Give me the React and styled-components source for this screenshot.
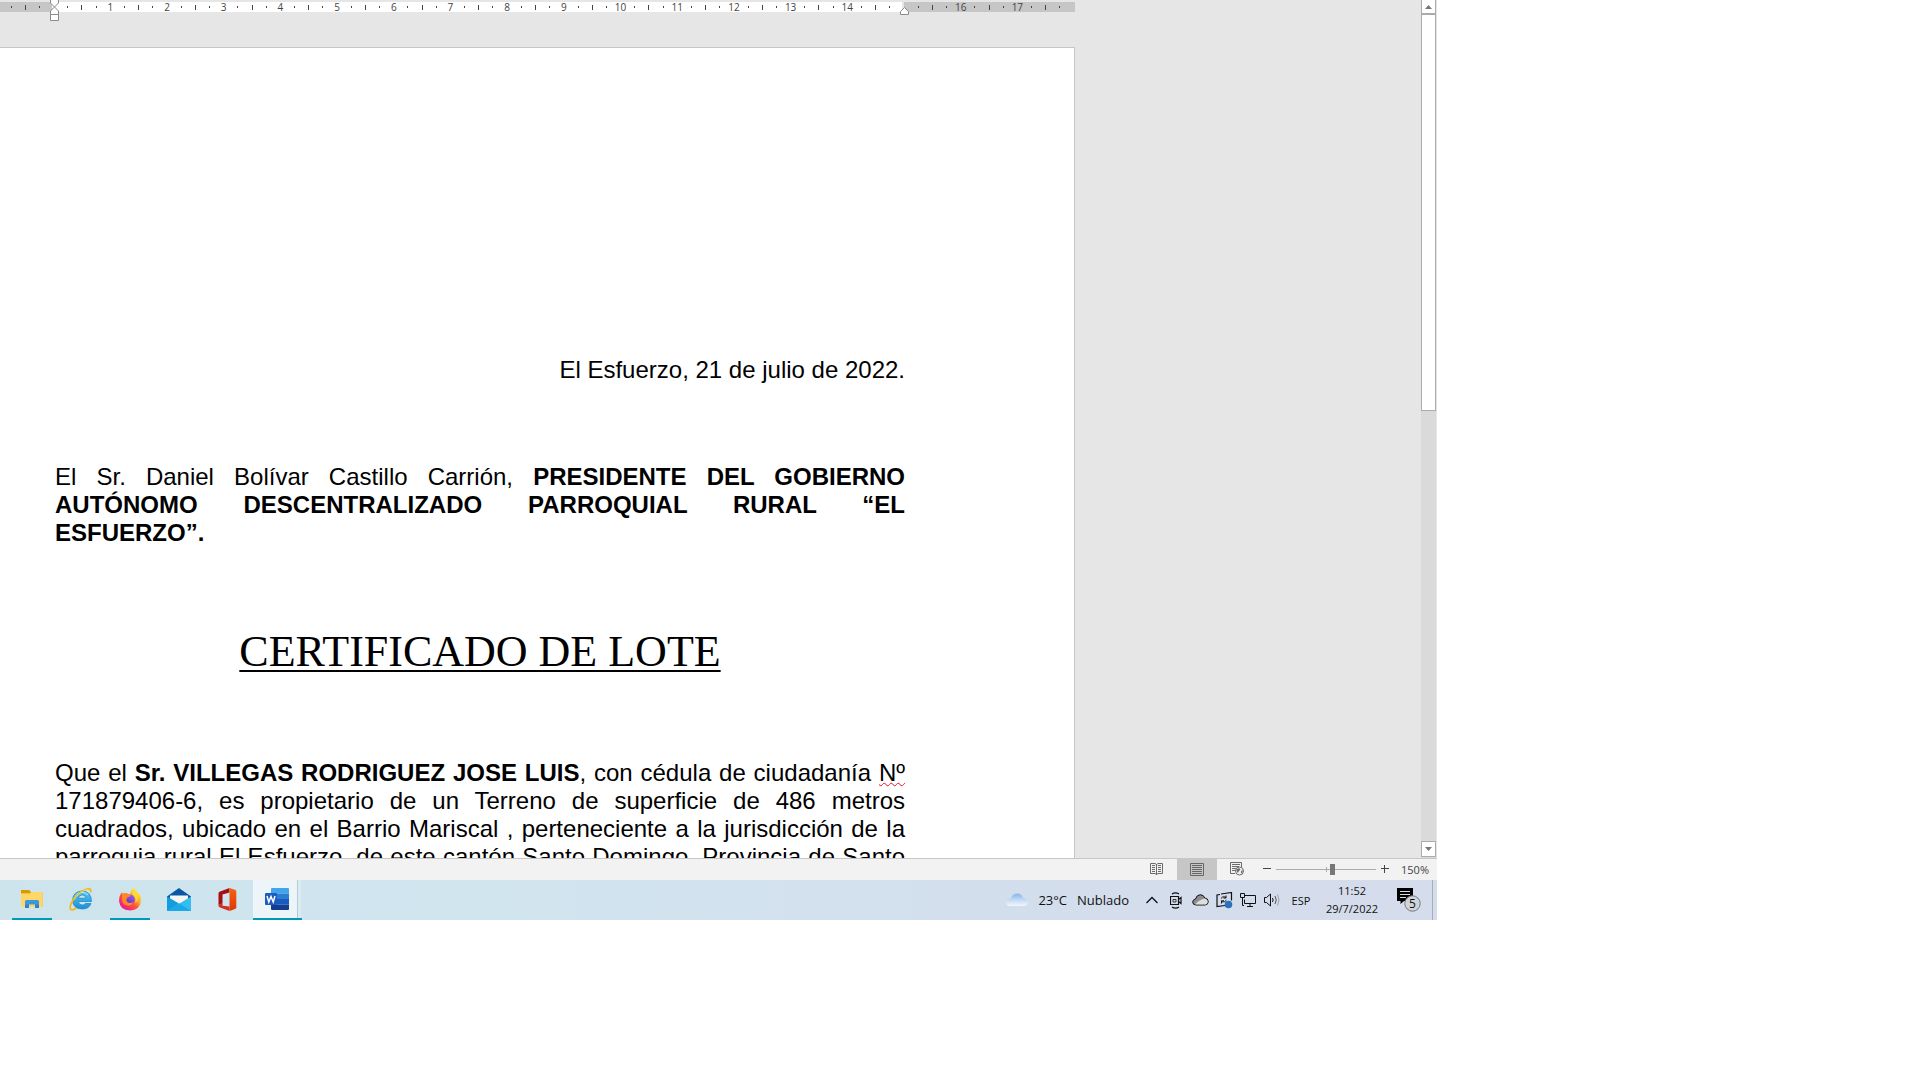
import { useState } from "react";
import styled, { createGlobalStyle } from "styled-components";

const GlobalStyle = createGlobalStyle`
  * {
    box-sizing: border-box;
  }

  body {
    margin: 0;
    background: #ffffff;
    font-family: "Open Sans", "Noto Sans", sans-serif;
  }

  button {
    padding: 0;
    border: none;
    background: none;
    color: inherit;
    font: inherit;
  }

  svg {
    display: block;
  }
`;

// The captured desktop leaves a blank band on the right and at the bottom
const Screen = styled.div`
  display: flex;
  flex-direction: column;
  height: 100vh;
  padding: 0 483px 160px 0;
  overflow: hidden;
`;

/* ---------- Word: document area ---------- */

const Workspace = styled.main`
  display: flex;
  flex: 1;
  min-height: 0;
  overflow: hidden;
  background: #e6e6e6;
`;

const DocumentColumn = styled.div`
  display: flex;
  flex: 1;
  flex-direction: column;
  min-width: 0;
  margin-right: 346px;
  padding-top: 2px;
`;

const Ruler = styled.div`
  display: grid;
  grid-template-columns: repeat(75, minmax(0, 1fr));
  flex: none;
  height: 10px;
  margin-bottom: 35px;
  padding: 0 8px 0 4px;
  background: linear-gradient(
    to right,
    #c6c6c6 52px,
    #ffffff 52px calc(100% - 173px),
    #e6e6e6 calc(100% - 173px) calc(100% - 171px),
    #c6c6c6 calc(100% - 171px)
  );
`;

const Tick = styled.span`
  display: flex;
  position: relative;
  align-items: center;
  justify-content: center;
  color: #444444;
  font-size: 10px;
  line-height: 10px;

  &::before {
    content: "";
    display: ${({ $kind }) => ($kind === "dot" || $kind === "line" ? "block" : "none")};
    width: 1px;
    height: ${({ $kind }) => ($kind === "line" ? "5px" : "2px")};
    background: #444444;
  }
`;

// Indent markers hang over the edge of the ruler
const Marker = styled.svg`
  position: absolute;
  top: ${({ $top }) => $top};
  left: 50%;
  margin-left: -4px;
`;

const Page = styled.article`
  flex: 1;
  min-height: 0;
  padding: 308px 169px 0 55px;
  overflow: hidden;
  border-top: 1px solid #c6c6c6;
  border-right: 1px solid #c6c6c6;
  background: #ffffff;
  color: #000000;
  font-family: "Liberation Sans", Arial, sans-serif;
  font-size: 24px;
  line-height: 28px;
`;

const Paragraph = styled.p`
  margin: 0;
  text-align: justify;
  text-align-last: ${({ $fill }) => ($fill ? "justify" : "auto")};
`;

const DateLine = styled(Paragraph)`
  margin-bottom: 79px;
  text-align: right;
`;

const Title = styled.h1`
  margin: 80px 0 82px;
  font-family: "Liberation Serif", "Times New Roman", serif;
  font-size: 44px;
  font-weight: 400;
  line-height: 50px;
  text-align: center;
  text-decoration: underline 2px;
  text-underline-offset: 4px;
  text-decoration-skip-ink: none;
`;

const Misspelled = styled.span`
  text-decoration: underline wavy #e8112d 1px;
  text-decoration-skip-ink: none;
`;

const Scrollbar = styled.div`
  display: flex;
  flex: none;
  flex-direction: column;
  width: 16px;
  padding-bottom: 1px;
  border-right: 1px solid #e6e6e6;
  background: #dadada;
`;

const ScrollButton = styled.button`
  display: flex;
  flex: none;
  align-items: center;
  justify-content: center;
  height: ${({ $height }) => $height};
  border: 1px solid #ababab;
  border-top-width: ${({ $cut }) => ($cut ? "0" : "1px")};
  background: #ffffff;
`;

const ScrollTrack = styled.div`
  flex: 1;
`;

const ScrollThumb = styled.div`
  height: 48%;
  border: 1px solid #ababab;
  background: #ffffff;
`;

/* ---------- Word: status bar ---------- */

const StatusBar = styled.footer`
  display: flex;
  flex: none;
  justify-content: flex-end;
  height: 22px;
  padding-right: 8px;
  border-top: 1px solid #c6c6c6;
  background: #f2f2f2;
  color: #444444;
  font-size: 11px;
`;

const ViewButton = styled.button`
  display: flex;
  align-items: center;
  justify-content: center;
  width: 40px;
  padding-bottom: 1px;
  background: ${({ $active }) => ($active ? "#c6c6c6" : "transparent")};
`;

const ZoomGroup = styled.div`
  display: flex;
  align-items: center;
  margin-left: 2px;
  padding-bottom: 1px;
`;

const ZoomButton = styled.button`
  display: flex;
  align-items: center;
  justify-content: center;
  width: 16px;
  height: 16px;
`;

const ZoomSlider = styled.input`
  width: 100px;
  height: 12px;
  margin: 0 1px;
  appearance: none;
  background:
    linear-gradient(#ababab, #ababab) center / 1px 5px no-repeat,
    linear-gradient(#ababab, #ababab) center / 100% 1px no-repeat;

  &::-webkit-slider-thumb {
    width: 5px;
    height: 11px;
    appearance: none;
    background: #777777;
  }
`;

const ZoomValue = styled.output`
  min-width: 28px;
  margin-left: 8px;
  text-align: right;
`;

/* ---------- Windows taskbar ---------- */

const Taskbar = styled.nav`
  display: flex;
  flex: none;
  justify-content: space-between;
  height: 40px;
  padding-left: 8px;
  background: linear-gradient(to right, #cde4ed, #d1e5ef 35%, #d3deec 70%, #d5dcec);
  color: #111111;
`;

const TaskbarGroup = styled.div`
  display: flex;
`;

const AppButton = styled.button`
  display: flex;
  align-items: center;
  justify-content: center;
  width: 49px;
  padding-right: 2px;
  border-bottom: 2px solid transparent;
  background: ${({ $running }) =>
    $running ? "linear-gradient(#0099bc, #0099bc) 4px 100% / 40px 2px no-repeat border-box" : "none"};
`;

// Current app: lighter tile, with a second window peeking out behind it
const ActiveAppButton = styled(AppButton)`
  padding-right: 1px;
  border-bottom-color: #0099bc;
  background: linear-gradient(
    to right,
    #edf5f9 44px,
    #b4cbd6 44px 45px,
    #dcebf2 45px 48px,
    transparent 48px
  );
  background-clip: padding-box;
`;

const TrayButton = styled.button`
  display: flex;
  align-items: center;
  justify-content: center;
  width: ${({ $width }) => $width || "24px"};
  font-size: 11px;
`;

const Weather = styled.button`
  display: flex;
  align-items: center;
  gap: 10px;
  margin-right: 11px;
  font-size: 13px;
`;

const Clock = styled(TrayButton)`
  flex-direction: column;
  line-height: 18px;
`;

const ShowDesktop = styled.button`
  width: 5px;
  border-left: 1px solid #a3adbb;
`;

/* ---------- Icons ---------- */

const Arrow = ({ down }) => (
  <svg width="7" height="4" viewBox="0 0 7 4" aria-hidden="true">
    <path d={down ? "M0 0h7L3.5 4z" : "M0 4h7L3.5 0z"} fill="#777" />
  </svg>
);

const ReadIcon = () => (
  <svg width="14" height="14" viewBox="0 0 14 14" fill="none" stroke="#6b6b6b">
    <path d="M6.5 2.5 5 1.5H.5v10H5l1.5 1 1.5-1h4.500v-10H8zM6.500 2v11" />
    <path d="M2 3.500h3M2 5.500h3M2 7.500h3M2 9.500h3M8 3.500h3M8 5.500h3M8 7.500h3M8 9.500h3" />
  </svg>
);

const PrintIcon = () => (
  <svg width="14" height="13" viewBox="0 0 14 13" fill="none" stroke="#666">
    <path d="M.5.5h13v12H.5zM2 2.500h10M2 4.500h10M2 6.500h10M2 8.500h10M2 10.500h10" />
  </svg>
);

const WebIcon = () => (
  <svg width="14" height="14" viewBox="0 0 14 14" fill="none" stroke="#6b6b6b">
    <path d="M5 11.500H.5V.5h11V5M2 2.500h8M2 4.500h7M2 6.500h4M2 8.500h3" />
    <circle cx="9.500" cy="9" r="4" fill="#f2f2f2" />
    <path d="M6.500 7.500 9 6l1.500 1.500L9 9l-1 2-1.500-2zM11 9l2-1-1 3-1 .5z" fill="#6b6b6b" stroke="none" />
  </svg>
);

const ExplorerIcon = () => (
  <svg width="22" height="20" viewBox="0 0 22 20">
    <path d="M0 1.500Q0 1 .6 1H8l2 2h10.500q1 0 1 1v14H0z" fill="#e9a820" />
    <path d="M0 4.500h9l1.500-1.500H20.500q1 0 1 1V18H0z" fill="#ffd768" />
    <path d="M0 1.500Q0 1 .6 1H8l1.500 1.800L8.500 4H0z" fill="#d99a00" />
    <path d="M4 19v-6.500Q4 11 5.500 11h11q1.500 0 1.500 1.500V19h-4v-3.500H8V19z" fill="#3c97dd" />
    <path d="M4 15.500h4V19H4zM14 15.500h4V19h-4z" fill="#2b85cd" />
  </svg>
);

const ExplorerEIcon = () => (
  <svg width="24" height="24" viewBox="0 0 24 24" fill="none">
    <defs>
      <linearGradient id="ie" x2="0" y2="1">
        <stop stopColor="#55c7f4" />
        <stop offset="1" stopColor="#1b8fd6" />
      </linearGradient>
    </defs>
    <path
      d="M22.500 14.500H9.300q.6 3.500 4 3.500 2.200 0 3-1.500h5.700Q20 22 13.200 22 4 22 3.500 13.200 4 4.500 13.200 4 22.500 4.500 22.500 14.500zM9.300 11.200h7.600Q16.500 8 13.200 8 10 8 9.300 11.200z"
      fill="url(#ie)"
      stroke="#1683c4"
      strokeWidth=".7"
    />
    <path d="M6 9Q8 5.500 13 5.300q4 0 6 2.700" stroke="#b5ecff" strokeWidth="1" />
    <path
      d="M21.500 5.500Q22.800.8 18 2 9.500 4.500 4 13-.3 20.500 2 22.500q1.500 1 5.500-1.500"
      stroke="#eeb81c"
      strokeWidth="1.800"
    />
    <path d="M19 2.300Q10 5 4.800 13" stroke="#ffe26b" strokeWidth=".7" />
  </svg>
);

const FirefoxIcon = () => (
  <svg width="24" height="24" viewBox="0 0 24 24">
    <defs>
      <linearGradient id="fox" x1=".85" y1=".1" x2=".2" y2=".9">
        <stop stopColor="#fff04a" />
        <stop offset=".35" stopColor="#ffae25" />
        <stop offset=".6" stopColor="#ff553c" />
        <stop offset="1" stopColor="#ed198c" />
      </linearGradient>
      <linearGradient id="foxGlobe" x1=".8" x2=".2" y2="1">
        <stop stopColor="#ad55e4" />
        <stop offset="1" stopColor="#493aca" />
      </linearGradient>
    </defs>
    <path
      d="M16 .5q1 2.500 3.200 4.500 1 .8 1.300 2L21 6q2.300 3.500 2 7.500-.8 9.500-11 10Q2 23.300 1 14q-.3-4 1.500-6.500L4 5l.5 2Q6 5.500 8.500 6 10 7 12 7.300l1-3Q13.800 2 16 .5z"
      fill="url(#fox)"
    />
    <circle cx="11.800" cy="12.500" r="5" fill="url(#foxGlobe)" />
    <path d="M4 7.500q3-2.500 7 .2l2 .5q-.3 1.700-3.500 2l-1 2.100Q7.800 15 11 16q2.500.2 4-1.200-.5 3.500-4.500 4Q4 18 4 12z" fill="#ff8a22" />
    <path d="M15.500 3q-2.500 3 .8 5.800Q19 12 17 16q4-2.500 2.500-8-1-2.500-4-5z" fill="#ffdb36" />
  </svg>
);

const MailIcon = () => (
  <svg width="24" height="23" viewBox="0 0 24 23">
    <path d="M0 8.500 12 0l12 8.500V12H0z" fill="#0a58a5" />
    <path d="M3 7.500h18V12l-9 7-9-7z" fill="#f5f5f5" />
    <path d="M0 8.500 12 15.500 4 23H0z" fill="#139de0" />
    <path d="M24 8.500V23H0z" fill="#36bdf0" />
    <path d="M0 23 12.500 15.500 24 23z" fill="#1aa8e8" />
  </svg>
);

const OfficeIcon = () => (
  <svg width="19" height="23" viewBox="0 0 19 23">
    <defs>
      <linearGradient id="office" x2="0" y2="1">
        <stop stopColor="#f56412" />
        <stop offset="1" stopColor="#db3709" />
      </linearGradient>
    </defs>
    <path d="M11.500 0 1.500 3.800Q.5 4.300.5 5.500v11.700l4-2V6.500l7-2z" fill="#a60f12" />
    <path d="M.5 17.200 4.500 15v2.700l7 .8V23L2 19.500Q.5 19 .5 17.200z" fill="#d42b22" />
    <path d="M11.500 0 17 1.800q1.300.5 1.300 1.700v15.700q0 1.300-1.300 1.800L11.500 23z" fill="url(#office)" />
  </svg>
);

const WordIcon = () => (
  <svg width="24" height="22" viewBox="0 0 24 22">
    <path d="M6 1q0-1 1-1h16q1 0 1 1v4.500H6z" fill="#41a5ee" />
    <path d="M6 5.500h18V11H6z" fill="#2b7cd3" />
    <path d="M6 11h18v5.500H6z" fill="#185abd" />
    <path d="M6 16.500h18V21q0 1-1 1H7q-1 0-1-1z" fill="#103f91" />
    <rect y="5" width="12" height="12" rx="1" fill="#1b5cbe" />
    <path d="m2 8 1.800 6L6 8.500 8.200 14 10 8" fill="none" stroke="#fff" strokeWidth="1.500" />
  </svg>
);

const CloudIcon = () => (
  <svg width="22" height="14" viewBox="0 0 22 14">
    <defs>
      <linearGradient id="cloud" x2="0" y2="1">
        <stop stopColor="#86b4ea" />
        <stop offset=".55" stopColor="#c8dcf6" />
        <stop offset="1" stopColor="#f2f6fc" />
      </linearGradient>
    </defs>
    <path d="M4 13q-4-.3-4-3.500Q.2 6 4.500 6 6 .6 11 .5q5 .2 6 4.500 5 .3 5 4.300-.3 3.500-4.500 3.700z" fill="url(#cloud)" />
  </svg>
);

const ChevronIcon = () => (
  <svg width="12" height="8" viewBox="0 0 12 8" fill="none" stroke="#111" strokeWidth="1.300">
    <path d="m.5 7 5.500-5.500L11.500 7" />
  </svg>
);

const CameraIcon = () => (
  <svg width="12" height="17" viewBox="0 0 12 17" fill="none" stroke="#111" strokeWidth="1.200">
    <path d="M.5 4.500h8v8h-8zM8.500 7.500l2.500-2v6l-2.500-2M2 2Q5.500-.3 9 2M2 15q3.500 2.300 7 0" />
    <path d="M3 7.500h3v2.500H3z" strokeWidth=".8" />
  </svg>
);

const OneDriveIcon = () => (
  <svg width="17" height="12" viewBox="0 0 17 12" stroke="#111">
    <path d="M4 11Q.7 10.800.7 8 1 5.300 3.500 5 4.500 1 8.200.7q3.500.1 4.600 3.300 3.400.3 3.500 3.700Q16 11 13 11z" fill="#8d8d8d" />
    <path d="M3 10.500Q6 6.500 12 4.500q3.500.3 3.700 3.200Q15.500 10.500 13 10.500z" fill="#dedede" stroke="none" />
  </svg>
);

const SyncScreenIcon = () => (
  <svg width="17" height="17" viewBox="0 0 17 17" fill="none" stroke="#111">
    <path d="M9 13.500 1 14.500V3l3-.5M5 2l10.500-1.500v8" strokeWidth="1.200" />
    <path d="M5 6.500q1.500-2.500 4-1.500l1 .5M10 3.500v2.500H7.500M10.500 8q-1.500 2.500-4 1.800L5.500 9M5.500 11.500V8.800H8" />
    <circle cx="12.500" cy="12.500" r="3.800" fill="#2a72c0" stroke="none" />
  </svg>
);

const NetworkIcon = () => (
  <svg width="17" height="14" viewBox="0 0 17 14" fill="none" stroke="#111">
    <path d="M5 2.500h10.500v8H4.500v-4M7 13.500h6M10 10.500v3M.5.5h4v4h-4zM2.500 4.500v8H4" />
  </svg>
);

const VolumeIcon = () => (
  <svg width="17" height="14" viewBox="0 0 17 14" fill="none" stroke="#111">
    <path d="M.5 4.500h2L6.500 1v12l-4-3.500h-2zM8.500 5q1.200 2 0 4" />
    <path d="M11 3q2.500 4 0 8" stroke="#555" />
    <path d="M13.500 1.500q3 5.500 0 11" stroke="#9aa2ae" />
  </svg>
);

const NoticeIcon = () => (
  <svg width="24" height="24" viewBox="0 0 24 24">
    <path d="M0 0h16v13H7l-3.500 3V13H0z" fill="#000" />
    <path d="M3 3.500h10M3 6.500h10M3 9.500h6" stroke="#d5dcec" />
    <circle cx="15.500" cy="15.500" r="7.700" fill="#cfd3da" stroke="#737780" />
    <text x="15.500" y="20" fill="#111" fontSize="12" textAnchor="middle">
      5
    </text>
  </svg>
);

/* ---------- App ---------- */

// Quarter-centimetre steps; index 3 is the left margin, 63 the right one
const tickAt = (index) => {
  const quarter = index - 3;
  if (quarter === 0) return { kind: "start" };
  if (quarter === 60) return { kind: "end" };
  if (quarter % 4 === 0) return { kind: "number", label: quarter / 4 };
  return { kind: quarter % 2 === 0 ? "line" : "dot" };
};

const ticks = Array.from({ length: 75 }, (_, index) => tickAt(index));

const RulerBar = () => (
  <Ruler>
    {ticks.map(({ kind, label }, index) => (
      <Tick key={index} $kind={kind}>
        {label}
        {kind === "start" && (
          <Marker $top="-2px" width="9" height="21" viewBox="0 0 9 21" fill="#fff" stroke="#8a8a8a">
            <path d="M.5 0v3l4 4 4-4V0M.5 14.500V11l4-4 4 4v3.500zM.5 14.500h8v6h-8z" />
          </Marker>
        )}
        {kind === "end" && (
          <Marker $top="5px" width="9" height="8" viewBox="0 0 9 8" fill="#fff" stroke="#8a8a8a">
            <path d="M.5 7.500V4.500l4-4 4 4v3z" />
          </Marker>
        )}
      </Tick>
    ))}
  </Ruler>
);

const ZoomControl = () => {
  const [position, setPosition] = useState(57);
  const step = (amount) => setPosition((value) => value + amount);

  return (
    <ZoomGroup>
      <ZoomButton aria-label="Alejar" onClick={() => step(-4)}>
        <svg width="8" height="8" stroke="#444">
          <path d="M0 3.500h8" />
        </svg>
      </ZoomButton>
      <ZoomSlider
        type="range"
        aria-label="Zoom"
        value={position}
        onChange={(event) => setPosition(Number(event.target.value))}
      />
      <ZoomButton aria-label="Acercar" onClick={() => step(4)}>
        <svg width="8" height="8" stroke="#444">
          <path d="M0 3.500h8M3.500 0v8" />
        </svg>
      </ZoomButton>
      <ZoomValue>150%</ZoomValue>
    </ZoomGroup>
  );
};

const App = () => {
  return (
    <>
      <GlobalStyle />
      <Screen>
        <Workspace>
          <DocumentColumn>
            <RulerBar />
            <Page>
              <DateLine>El Esfuerzo, 21 de julio de 2022.</DateLine>
              <Paragraph>
                El Sr. Daniel Bolívar Castillo Carrión,{" "}
                <b>PRESIDENTE DEL GOBIERNO AUTÓNOMO DESCENTRALIZADO PARROQUIAL RURAL “EL ESFUERZO”.&nbsp;</b>
              </Paragraph>
              <Title>CERTIFICADO DE LOTE</Title>
              <Paragraph $fill>
                Que el <b>Sr. VILLEGAS RODRIGUEZ JOSE LUIS</b>, con cédula de ciudadanía{" "}
                <Misspelled>Nº</Misspelled> 171879406-6, es propietario de un Terreno de superficie de 486
                metros cuadrados, ubicado en el Barrio Mariscal , perteneciente a la jurisdicción de la
                parroquia rural El Esfuerzo, de este cantón Santo Domingo, Provincia de Santo
              </Paragraph>
            </Page>
          </DocumentColumn>
          <Scrollbar>
            <ScrollButton $height="14px" $cut aria-label="Subir">
              <Arrow />
            </ScrollButton>
            <ScrollTrack>
              <ScrollThumb />
            </ScrollTrack>
            <ScrollButton $height="16px" aria-label="Bajar">
              <Arrow down />
            </ScrollButton>
          </Scrollbar>
        </Workspace>

        <StatusBar>
          <ViewButton aria-label="Modo de lectura">
            <ReadIcon />
          </ViewButton>
          <ViewButton $active aria-label="Diseño de impresión">
            <PrintIcon />
          </ViewButton>
          <ViewButton aria-label="Diseño web">
            <WebIcon />
          </ViewButton>
          <ZoomControl />
        </StatusBar>

        <Taskbar>
          <TaskbarGroup>
            <AppButton $running aria-label="Explorador de archivos">
              <ExplorerIcon />
            </AppButton>
            <AppButton aria-label="Internet Explorer">
              <ExplorerEIcon />
            </AppButton>
            <AppButton $running aria-label="Firefox">
              <FirefoxIcon />
            </AppButton>
            <AppButton aria-label="Correo">
              <MailIcon />
            </AppButton>
            <AppButton aria-label="Office">
              <OfficeIcon />
            </AppButton>
            <ActiveAppButton aria-label="Word">
              <WordIcon />
            </ActiveAppButton>
          </TaskbarGroup>

          <TaskbarGroup>
            <Weather>
              <CloudIcon />
              <span>23°C</span>
              <span>Nublado</span>
            </Weather>
            <TrayButton aria-label="Mostrar iconos ocultos">
              <ChevronIcon />
            </TrayButton>
            <TrayButton aria-label="Reunirse ahora">
              <CameraIcon />
            </TrayButton>
            <TrayButton aria-label="OneDrive">
              <OneDriveIcon />
            </TrayButton>
            <TrayButton aria-label="Actualizaciones">
              <SyncScreenIcon />
            </TrayButton>
            <TrayButton aria-label="Red">
              <NetworkIcon />
            </TrayButton>
            <TrayButton aria-label="Volumen">
              <VolumeIcon />
            </TrayButton>
            <TrayButton $width="34px">ESP</TrayButton>
            <Clock $width="68px">
              <span>11:52</span>
              <span>29/7/2022</span>
            </Clock>
            <TrayButton $width="46px" aria-label="Notificaciones">
              <NoticeIcon />
            </TrayButton>
            <ShowDesktop aria-label="Mostrar escritorio" />
          </TaskbarGroup>
        </Taskbar>
      </Screen>
    </>
  );
};

export default App;
